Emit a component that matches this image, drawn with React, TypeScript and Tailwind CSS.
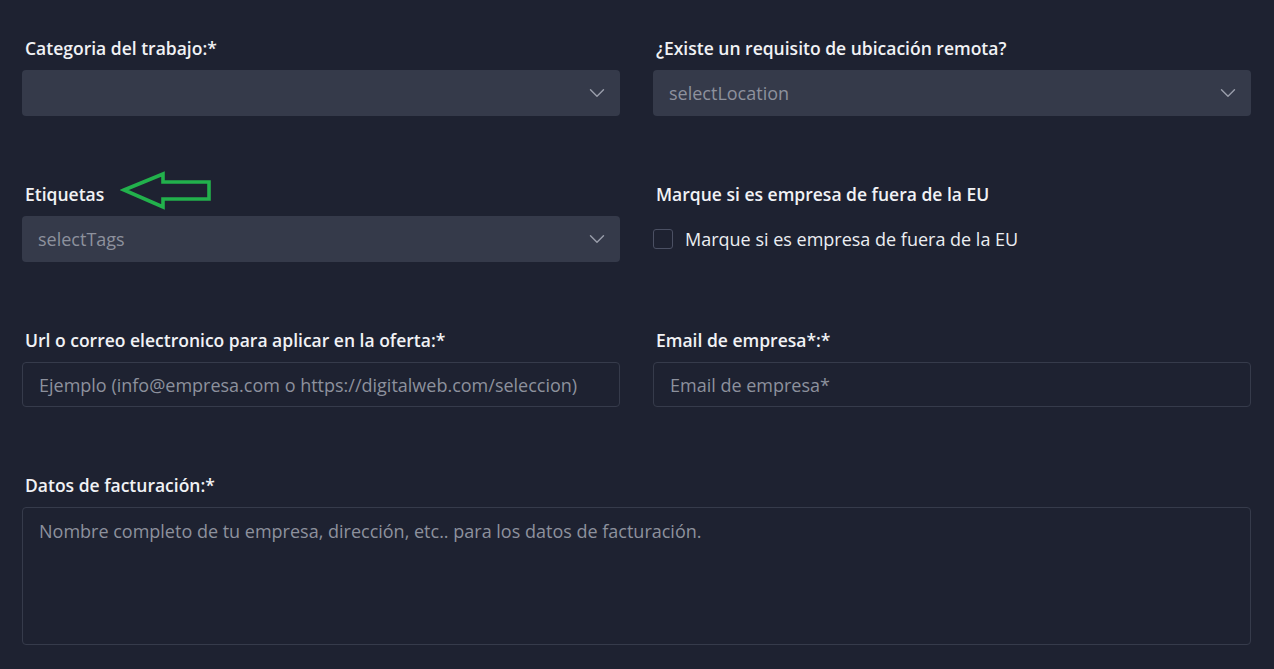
import { ChevronDown } from "lucide-react";

const font = { fontFamily: '"Open Sans", "Liberation Sans", sans-serif' };

const Label = ({ children }: { children: React.ReactNode }) => (
  <label className="block px-[3px] mb-[10px] text-[17.5px] leading-6 font-semibold text-[#f1f2f5] whitespace-nowrap">
    {children}
  </label>
);

const SelectBox = ({ placeholder }: { placeholder?: string }) => (
  <div className="flex items-center justify-between h-[46px] rounded-[4px] bg-[#353a4a] pl-4 pr-[10px]">
    <span className="text-[18px] text-[#8d919d]">{placeholder}</span>
    <ChevronDown className="w-[26px] h-[26px] text-[#9a9eab]" strokeWidth={1.3} />
  </div>
);

const TextInput = ({ placeholder }: { placeholder: string }) => (
  <input
    className="w-full h-[45px] rounded-[4px] border border-[#363b4b] bg-transparent px-4 text-[18px] text-[#e5e7eb] placeholder:text-[#8d919d] outline-none"
    placeholder={placeholder}
    style={font}
  />
);

// green annotation arrow pointing at the "Etiquetas" label
const Arrow = () => (
  <svg width="96" height="44" viewBox="0 0 96 44" className="absolute left-[98px] -top-[13px]">
    <polygon
      points="4,21 43,5 43,13 89,13 89,30 43,30 43,38"
      fill="none"
      stroke="#22b14c"
      strokeWidth="3.6"
      strokeLinejoin="miter"
    />
  </svg>
);

export default function App() {
  return (
    <div className="min-h-[669px] bg-[#1e2231] pl-[22px] pr-[23px] pt-[36px] pb-6" style={font}>
      <div className="grid grid-cols-2 gap-x-[33px] gap-y-[66px]">
        <div>
          <Label>Categoria del trabajo:*</Label>
          <SelectBox />
        </div>
        <div>
          <Label>¿Existe un requisito de ubicación remota?</Label>
          <SelectBox placeholder="selectLocation" />
        </div>

        <div className="relative">
          <Label>Etiquetas</Label>
          <Arrow />
          <SelectBox placeholder="selectTags" />
        </div>
        <div>
          <Label>Marque si es empresa de fuera de la EU</Label>
          <div className="flex items-center h-[46px]">
            <span className="w-[20px] h-[20px] rounded-[3px] border border-[#4b5063] bg-[#1e2231]" />
            <span className="ml-3 text-[18px] text-[#eceef2]">Marque si es empresa de fuera de la EU</span>
          </div>
        </div>

        <div>
          <Label>Url o correo electronico para aplicar en la oferta:*</Label>
          <TextInput placeholder="Ejemplo (info@empresa.com o https://digitalweb.com/seleccion)" />
        </div>
        <div>
          <Label>Email de empresa*:*</Label>
          <TextInput placeholder="Email de empresa*" />
        </div>

        <div className="col-span-2">
          <Label>Datos de facturación:*</Label>
          <textarea
            className="block w-full h-[138px] resize-none rounded-[4px] border border-[#363b4b] bg-transparent px-4 py-[10px] text-[18px] text-[#e5e7eb] placeholder:text-[#8d919d] outline-none"
            placeholder="Nombre completo de tu empresa, dirección, etc.. para los datos de facturación."
            style={font}
          />
        </div>
      </div>
    </div>
  );
}
